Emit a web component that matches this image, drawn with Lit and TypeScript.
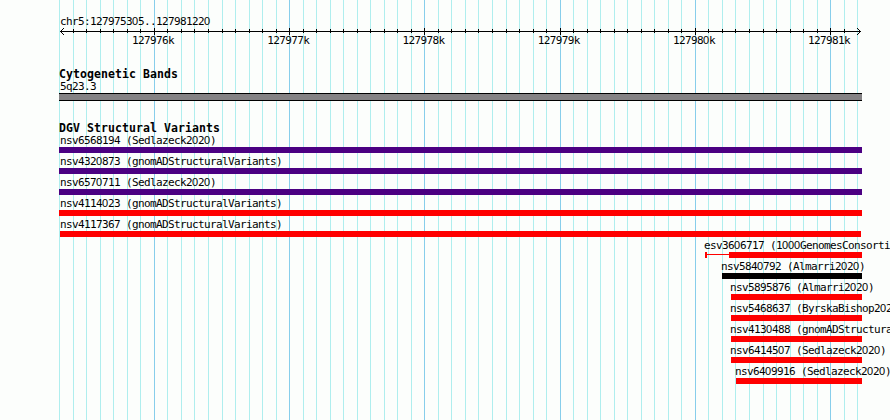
import { LitElement, html, svg, css } from 'lit';
import { customElement, property } from 'lit/decorators.js';

const WIDTH = 890;
const HEIGHT = 420;
const FIRST_TICK = 127975300;
const TICK_STEP = 100;
const TICK_COUNT = 60;

const tickX = (i: number) => Math.round(59.2 + i * 13.525);

const ticks = Array.from({ length: TICK_COUNT }, (_, i) => {
  const pos = FIRST_TICK + i * TICK_STEP;
  return { x: tickX(i), pos, major: pos % 1000 === 0 };
});

interface Variant {
  name: string;
  source: string;
  start: number;
  end: number;
  color: string;
  tail?: number; // length of the uncertain left end
}

const variants: Variant[] = [
  { name: 'nsv6568194', source: 'Sedlazeck2020', start: 59, end: 862, color: '#4b0082' },
  { name: 'nsv4320873', source: 'gnomADStructuralVariants', start: 59, end: 862, color: '#4b0082' },
  { name: 'nsv6570711', source: 'Sedlazeck2020', start: 59, end: 862, color: '#4b0082' },
  { name: 'nsv4114023', source: 'gnomADStructuralVariants', start: 59, end: 862, color: '#ff0000' },
  { name: 'nsv4117367', source: 'gnomADStructuralVariants', start: 60, end: 861, color: '#ff0000' },
  { name: 'esv3606717', source: '1000GenomesConsortiumPhase3', start: 705, end: 862, color: '#ff0000', tail: 24 },
  { name: 'nsv5840792', source: 'Almarri2020', start: 722, end: 862, color: '#000000' },
  { name: 'nsv5895876', source: 'Almarri2020', start: 731, end: 862, color: '#ff0000' },
  { name: 'nsv5468637', source: 'ByrskaBishop2022', start: 731, end: 862, color: '#ff0000' },
  { name: 'nsv4130488', source: 'gnomADStructuralVariants', start: 731, end: 862, color: '#ff0000' },
  { name: 'nsv6414507', source: 'Sedlazeck2020', start: 731, end: 862, color: '#ff0000' },
  { name: 'nsv6409916', source: 'Sedlazeck2020', start: 736, end: 862, color: '#ff0000' },
];

// The monospace zero is slashed, so zeros are set in the sans face.
const label = (text: string) =>
  text.split(/(0+)/).map((part) => (part.startsWith('0') ? html`<span class="zero">${part}</span>` : part));

const zeroStyles = css`
  .zero {
    font: 11px/1 'Liberation Sans', sans-serif;
    letter-spacing: -0.117px;
  }
`;

/**
 * Vertical guide lines behind the tracks
 *
 * @element genome-grid
 */
@customElement('genome-grid')
export class GenomeGrid extends LitElement {
  static styles = css`
    :host {
      display: block;
    }

    svg {
      display: block;
    }

    .minor {
      fill: #afeeee;
    }

    .major {
      fill: #87ceeb;
    }
  `;

  render() {
    return html`
      <svg width=${WIDTH} height=${HEIGHT} shape-rendering="crispEdges">
        ${ticks.map(
          (t) => svg`<rect class=${t.major ? 'major' : 'minor'} x=${t.x} y="0" width="1" height=${HEIGHT}></rect>`
        )}
      </svg>
    `;
  }
}

/**
 * Ruler with arrow heads and position labels
 *
 * @element genome-ruler
 */
@customElement('genome-ruler')
export class GenomeRuler extends LitElement {
  static styles = [
    zeroStyles,
    css`
      :host {
        display: block;
        height: 34px;
      }

      .axis {
        display: block;
      }

      .labels {
        display: grid;
        grid-template-columns: 174px repeat(4, 135.25px) 135px;
        margin-top: -2px;
        height: 13px;
        line-height: 13px;
      }

      .labels div {
        justify-self: end;
        width: 42px;
        white-space: pre;
      }
    `,
  ];

  render() {
    return html`
      <svg class="axis" width=${WIDTH} height="9" shape-rendering="crispEdges">
        <rect x="60" y="4" width="801" height="1"></rect>
        ${ticks
          .slice(1, -1)
          .map((t) =>
            t.major
              ? svg`<rect x=${t.x} y="1" width="1" height="7"></rect>`
              : svg`<rect x=${t.x} y="2" width="1" height="4"></rect>`
          )}
        ${[1, 2, 3].map(
          (d) => svg`
            <rect x=${60 + d} y=${4 - d} width="1" height="1"></rect>
            <rect x=${60 + d} y=${4 + d} width="1" height="1"></rect>
            <rect x=${860 - d} y=${4 - d} width="1" height="1"></rect>
            <rect x=${860 - d} y=${4 + d} width="1" height="1"></rect>
          `
        )}
      </svg>
      <div class="labels">
        ${ticks.filter((t) => t.major).map((t) => html`<div>${label(`${t.pos / 1000}k`)}</div>`)}
      </div>
    `;
  }
}

/**
 * One labelled variant bar
 *
 * @element variant-row
 *
 * @prop {Variant} variant - The variant to draw
 */
@customElement('variant-row')
export class VariantRow extends LitElement {
  @property({ attribute: false }) variant!: Variant;

  static styles = [
    zeroStyles,
    css`
      :host {
        display: block;
        height: 21px;
      }

      .name {
        height: 13px;
        line-height: 13px;
        white-space: pre;
      }

      .bar {
        display: flex;
        align-items: center;
        height: 6px;
      }

      .cap {
        width: 2px;
        height: 6px;
        background: currentColor;
      }

      .tail {
        height: 1px;
        margin-bottom: 1px;
        background: currentColor;
      }

      .body {
        flex: 1;
        height: 6px;
        background: currentColor;
      }
    `,
  ];

  render() {
    const { name, source, start, end, color, tail } = this.variant;
    const textStart = Math.max(60, start - 1);
    return html`
      <div class="name" style="margin-left:${textStart}px">${label(`${name} (${source})`)}</div>
      <div class="bar" style="margin-left:${start}px;width:${end - start}px;color:${color}">
        ${tail
          ? html`<div class="cap"></div><div class="tail" style="width:${tail - 2}px"></div>`
          : ''}
        <div class="body"></div>
      </div>
    `;
  }
}

@customElement('app-root')
export class AppRoot extends LitElement {
  static styles = [
    zeroStyles,
    css`
      :host {
        display: grid;
        width: 890px;
        height: 420px;
        overflow: hidden;
        background: #fcfefc;
        color: #000;
        font: 11px/13px 'DejaVu Sans Mono', monospace;
        letter-spacing: -0.622px;
      }

      genome-grid,
      .tracks {
        grid-area: 1 / 1;
        min-width: 0;
      }

      .tracks {
        padding-top: 15px;
      }

      .region,
      .band-name {
        padding-left: 60px;
        white-space: pre;
      }

      .region {
        height: 12px;
      }

      .band-name {
        height: 13px;
      }

      h2 {
        margin: 0;
        height: 12px;
        padding-left: 59px;
        font: bold 11.5px/13px 'DejaVu Sans Mono', monospace;
        letter-spacing: 0.077px;
      }

      .cyto {
        margin-top: 7px;
      }

      .band {
        box-sizing: border-box;
        margin-left: 59px;
        width: 803px;
        height: 8px;
        border: solid #000;
        border-width: 1px 0;
        background: #848284;
      }

      .variants {
        margin-top: 21px;
      }
    `,
  ];

  render() {
    return html`
      <genome-grid></genome-grid>
      <div class="tracks">
        <div class="region">${label('chr5:127975305..127981220')}</div>
        <genome-ruler></genome-ruler>
        <section class="cyto">
          <h2>Cytogenetic Bands</h2>
          <div class="band-name">5q23.3</div>
          <div class="band"></div>
        </section>
        <section class="variants">
          <h2>DGV Structural Variants</h2>
          ${variants.map((v) => html`<variant-row .variant=${v}></variant-row>`)}
        </section>
      </div>
    `;
  }
}
